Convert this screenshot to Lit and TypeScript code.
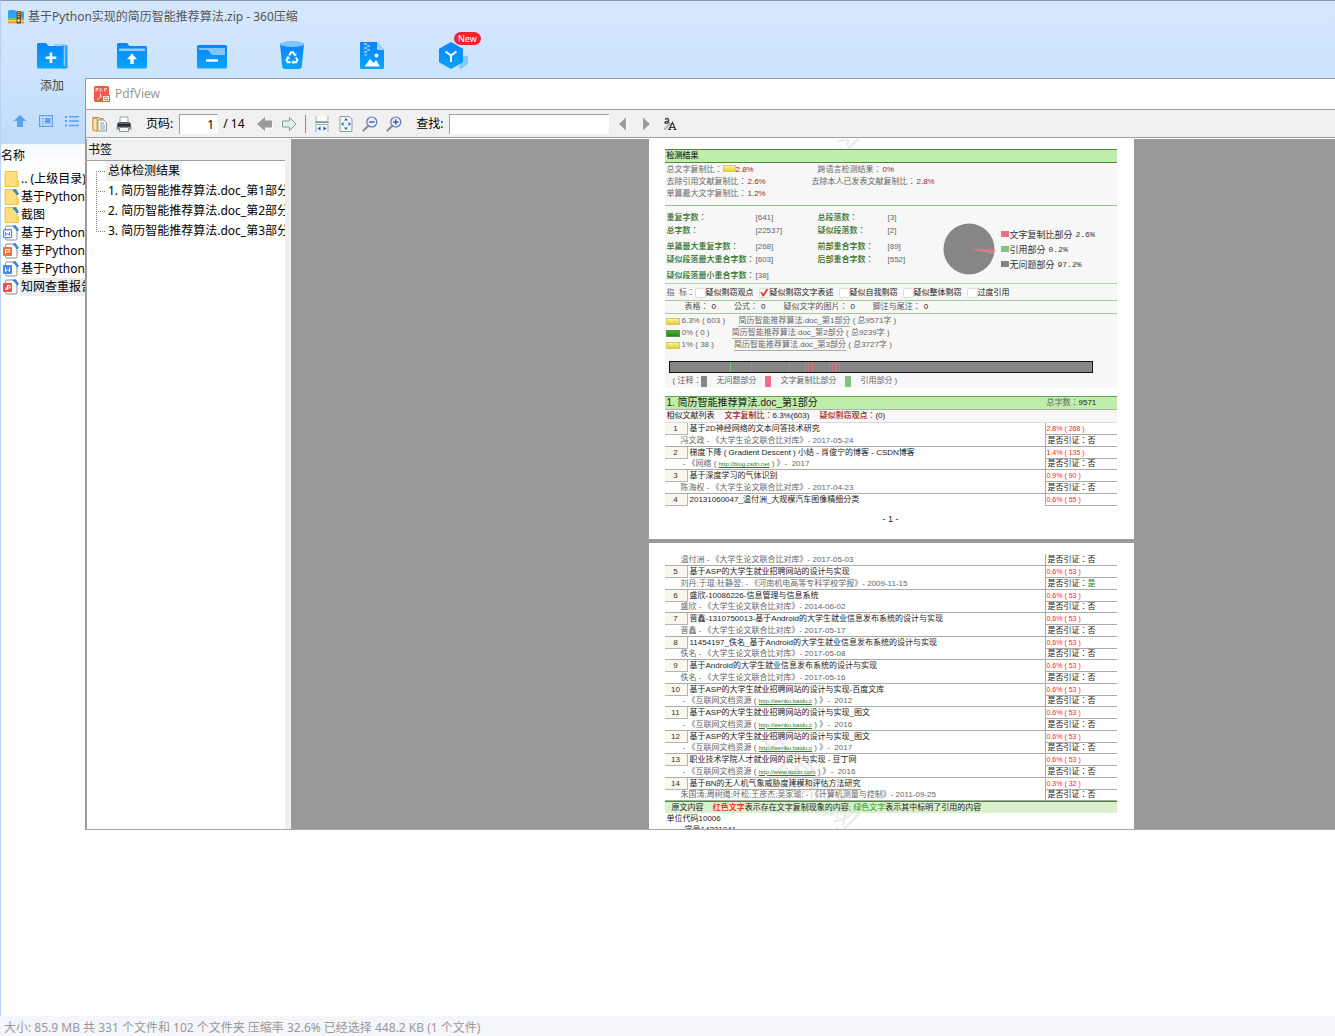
import { LitElement, html, svg, css, nothing } from "lit";
import { customElement } from "lit/decorators.js";
import { classMap } from "lit/directives/class-map.js";

/* ---------- data ---------- */

interface Source {
  no: number;
  title: string;
  linked?: boolean;
  before: string;
  url?: string;
  after?: string;
  rate: string;
  cited?: boolean;
}

const thesis = (who: string, date: string) => `${who} - 《大学生论文联合比对库》- ${date}`;
const WEB = " - 《互联网文档资源 ( ";

const SOURCES: Source[] = [
  { no: 1, title: "基于2D神经网络的文本问答技术研究", before: thesis("冯文政", "2017-05-24"), rate: "2.8% ( 268 )" },
  { no: 2, title: "梯度下降 ( Gradient Descent ) 小结 - 肖俊宁的博客 - CSDN博客", before: " - 《网络 ( ", url: "http://blog.csdn.net", after: " ) 》-  2017", rate: "1.4% ( 135 )" },
  { no: 3, title: "基于深度学习的气体识别", before: thesis("陈海权", "2017-04-23"), rate: "0.9% ( 90 )" },
  { no: 4, title: "20131060047_温付洲_大规模汽车图像精细分类", before: thesis("温付洲", "2017-05-03"), rate: "0.6% ( 55 )" },
  { no: 5, title: "基于ASP的大学生就业招聘网站的设计与实现", linked: true, before: "刘丹;于琨;杜静翌; - 《河南机电高等专科学校学报》- 2009-11-15", rate: "0.6% ( 53 )", cited: true },
  { no: 6, title: "盛欣-10086226-信息管理与信息系统", before: thesis("盛欣", "2014-06-02"), rate: "0.6% ( 53 )" },
  { no: 7, title: "晋鑫-1310750013-基于Android的大学生就业信息发布系统的设计与实现", before: thesis("晋鑫", "2017-05-17"), rate: "0.6% ( 53 )" },
  { no: 8, title: "11454197_佚名_基于Android的大学生就业信息发布系统的设计与实现", before: thesis("佚名", "2017-05-08"), rate: "0.6% ( 53 )" },
  { no: 9, title: "基于Android的大学生就业信息发布系统的设计与实现", before: thesis("佚名", "2017-05-16"), rate: "0.6% ( 53 )" },
  { no: 10, title: "基于ASP的大学生就业招聘网站的设计与实现-百度文库", before: WEB, url: "http://wenku.baidu.c", after: " ) 》-  2012", rate: "0.6% ( 53 )" },
  { no: 11, title: "基于ASP的大学生就业招聘网站的设计与实现_图文", before: WEB, url: "http://wenku.baidu.c", after: " ) 》-  2016", rate: "0.6% ( 53 )" },
  { no: 12, title: "基于ASP的大学生就业招聘网站的设计与实现_图文", before: WEB, url: "http://wenku.baidu.c", after: " ) 》-  2017", rate: "0.6% ( 53 )" },
  { no: 13, title: "职业技术学院人才就业网的设计与实现 - 豆丁网", before: WEB, url: "http://www.docin.com", after: " ) 》-  2016", rate: "0.6% ( 53 )" },
  { no: 14, title: "基于BN的无人机气象威胁度建模和评估方法研究", linked: true, before: "朱国涛;周树道;叶松;王彦杰;吴家瑜; - 《计算机测量与控制》- 2011-09-25", rate: "0.3% ( 32 )" },
];

const COUNTS = [
  [["重复字数：", "[641]", "总段落数：", "[3]"], ["总字数：", "[22537]", "疑似段落数：", "[2]"]],
  [["单篇最大重复字数：", "[268]", "前部重合字数：", "[89]"], ["疑似段落最大重合字数：", "[603]", "后部重合字数：", "[552]"]],
  [["疑似段落最小重合字数：", "[38]", "", ""]],
];

const FLAGS = [
  { name: "疑似剽窃观点", on: false },
  { name: "疑似剽窃文字表述", on: true },
  { name: "疑似自我剽窃", on: false },
  { name: "疑似整体剽窃", on: false },
  { name: "过度引用", on: false },
];

const PARTS = [
  { level: "yellow", text: "6.3% ( 603 )", pad: 6, n: 1, total: 9571 },
  { level: "green", text: "0% ( 0 )", pad: 10, n: 2, total: 9239 },
  { level: "yellow", text: "1% ( 38 )", pad: 9, n: 3, total: 3727 },
];

const HITS = [81, 119, 135, 138, 142, 159, 162, 165, 166, 169, 421];

type FileKind = "folder" | "link-folder" | "doc" | "ppt" | "word" | "pdf";
const FILES: { kind: FileKind; name: string; selected?: boolean }[] = [
  { kind: "folder", name: ".. (上级目录)" },
  { kind: "link-folder", name: "基于Python实现" },
  { kind: "link-folder", name: "截图" },
  { kind: "doc", name: "基于Python实现" },
  { kind: "ppt", name: "基于Python实现" },
  { kind: "word", name: "基于Python实现" },
  { kind: "pdf", name: "知网查重报告", selected: true },
];

const BOOKMARKS = [
  "总体检测结果",
  "1. 简历智能推荐算法.doc_第1部分",
  "2. 简历智能推荐算法.doc_第2部分",
  "3. 简历智能推荐算法.doc_第3部分",
];

/* ---------- icons ---------- */

const blueFill = svg`<defs><linearGradient id="b" x1="0" y1="0" x2="0" y2="1"><stop offset="0" stop-color="#0a84ff"/><stop offset="1" stop-color="#06a5fb"/></linearGradient></defs>`;
const big = (body: unknown) => html`<svg width="32" height="30" viewBox="0 0 32 30">${blueFill}${body}</svg>`;

const iconAdd = big(svg`
  <path d="M26 4h4a1.500 1.500 0 0 1 1.500 1.500V26a1.500 1.500 0 0 1-1.500 1.500H26z" fill="#2b9bfb"/>
  <path d="M1 3.500A1.500 1.500 0 0 1 2.500 2H10l2.500 3H28a1 1 0 0 1 1 1v21.500H2.500A1.500 1.500 0 0 1 1 26z" fill="url(#b)"/>
  <path d="M18 3.800h10.500V25" fill="none" stroke="#8ccafd" stroke-width="1.600"/>
  <path d="M15 11.500v10.500M9.700 16.700h10.600" stroke="#fff" stroke-width="2.600"/>`);
const iconExtract = big(svg`
  <path d="M1 3.500A1.500 1.500 0 0 1 2.500 2H11l2.500 3H29.500A1.500 1.500 0 0 1 31 6.500V26a1.500 1.500 0 0 1-1.500 1.500h-27A1.500 1.500 0 0 1 1 26z" fill="url(#b)"/>
  <path d="M3 7.500h26v2.500H3z" fill="#8fcbff"/>
  <path d="M16 12.500l5 5.700h-3.300v4.800h-3.400v-4.800H11z" fill="#fff"/>`);
const iconOneClick = big(svg`
  <rect x="1" y="4" width="30" height="23.500" rx="1.500" fill="url(#b)"/>
  <path d="M3 7h26v7H16l-4-5H3z" fill="#7fc4ff"/>
  <path d="M10 19.500h12" stroke="#fff" stroke-width="2.400"/>`);
const iconTrash = big(svg`
  <path d="M4 2.500h24L25.800 26a3 3 0 0 1-3 2H9.200a3 3 0 0 1-3-2z" fill="url(#b)"/>
  <ellipse cx="16" cy="3" rx="12" ry="3" fill="#7fc4ff"/>
  <g fill="none" stroke="#fff" stroke-width="2">
    <path d="M13.200 14.500l1.900-3.200h2l1.600 2.700"/><path d="M20 16.500l1.500 2.800-1.200 2h-3"/><path d="M14.500 21.300h-2.800l-1.200-2 1.300-2.300"/>
  </g>
  <path d="M20.500 12l-.4 3.600-3.100-1.600zM17.800 18.900v4.600l-2.600-2.300zM10 15.800l3.200-.4.700 3.300z" fill="#fff"/>`);
const iconImage = big(svg`
  <path d="M4 1h17l7 8v17.500a1.500 1.500 0 0 1-1.500 1.500h-21A1.500 1.500 0 0 1 4 26.500z" fill="url(#b)"/>
  <path d="M21 1l7 8h-7z" fill="#9bd2ff"/>
  <path d="M8 2h3v2H8zM11 4h3v2h-3zM8 6h3v2H8zM11 8h3v2h-3zM8 10h3v2H8zM8.500 13h2.500v1.800H8.500z" fill="#7fc4ff"/>
  <path d="M8.500 25.500l5.500-7.500 3.500 4 2.500-3 4 6.500z" fill="#fff"/><circle cx="20.500" cy="14.500" r="1.900" fill="#fff"/>`);
const iconBox = big(svg`
  <path d="M24 16l8-1.500v8l-6 5h-3z" fill="#84c6ff"/>
  <path d="M15 1l12 6.800v13.400L15 28 3 21.200V7.800z" fill="url(#b)"/>
  <path d="M9.500 10.500l5.500 4 5.500-4M15 14.500v6.500" fill="none" stroke="#fff" stroke-width="2"/>`);

const iconApp = html`<svg width="16" height="16" viewBox="0 0 16 16">
  <path d="M0 2.500A1.500 1.500 0 0 1 1.500 1H7l1.500 1.500H16V12H0z" fill="#2ea3ef"/>
  <path d="M0 9h16v2H0z" fill="#7ac943"/><path d="M0 11.500h16v1.500a1.500 1.500 0 0 1-1.500 1.500h-13A1.500 1.500 0 0 1 0 13z" fill="#f59b23"/>
  <path d="M0 11h16v1.500H0z" fill="#ffd34d"/>
  <rect x="8.500" y="2" width="4.500" height="12.500" fill="#7a5230"/><path d="M10.700 3v5.500" stroke="#f5c26b" stroke-width="1.500" stroke-dasharray="1 1"/>
  <circle cx="10.700" cy="11.500" r="1.300" fill="#ffe9a8"/></svg>`;

const small = (body: unknown) => html`<svg width="14" height="14" viewBox="0 0 14 14" fill="#5f9fee">${body}</svg>`;
const iconUp = small(svg`<path d="M7 1l6.500 6H10v6H4V7H.500z"/>`);
const iconCard = small(svg`<path d="M0 1h14v12H0z M1.200 2.200v9.600h11.600V2.200z" fill-rule="evenodd"/><path d="M3 4h1.600v1.600H3zM3 6.700h1.600v1.400H3zM3 9.200h1.600v1.400H3zM6 4h5.500v5.500H6z"/>`);
const iconList = small(svg`<path d="M0 2h2v2H0zM0 6h2v2H0zM0 10.500h2v2H0zM4 2h10v1.600H4zM4 6.200h10v1.600H4zM4 10.700h10v1.600H4z"/>`);

const dot = svg`<path d="M10 1l2.500-1L16 5l-2 1.500z" fill="#2f86d6"/><path d="M9.500.500l2 .300.800 2-2-.400z" fill="#2f86d6"/>`;
const letters: Record<string, unknown> = {
  doc: svg`<rect x=".600" y="4.600" width="8" height="8" rx="1" fill="#fff" stroke="#4c86f0" stroke-width="1.200"/><path d="M2.500 7v3.500l2-2 2 2V7" fill="none" stroke="#4c86f0"/>`,
  word: svg`<rect y="4" width="9" height="9" rx="1" fill="#4c86f0"/><path d="M2.500 6.500v4l2-2 2 2v-4" fill="none" stroke="#fff"/>`,
  ppt: svg`<rect y="4" width="9" height="9" rx="1" fill="#f2703a"/><path d="M2.500 11V6.500h4v2.500h-4" fill="none" stroke="#fff"/>`,
  pdf: svg`<rect y="4" width="9" height="9" rx="1" fill="#e8504f"/><path d="M2 10.500h2.500V6.500h2.500v2.500H2" fill="none" stroke="#fff"/>`,
};

function fileIcon(kind: FileKind) {
  const body = kind === "folder" || kind === "link-folder"
    ? svg`<path d="M2 .500h12v9h1.500v6H2z" fill="#ffdf7e" stroke="#e8c34f"/><path d="M12.500 10v5.500h3V10z" fill="#fbd261"/>`
    : svg`<path d="M2.500 2.500a1.500 1.500 0 0 1 1.500-1.500h6l4 4v8.500a1.500 1.500 0 0 1-1.500 1.500H4a1.500 1.500 0 0 1-1.500-1.500z" fill="#fff" stroke="#8b8b8b"/>${letters[kind]}`;
  return html`<svg width="16" height="16" viewBox="0 0 16 16">${body}${kind === "folder" ? nothing : dot}</svg>`;
}

const tool = (body: unknown) => html`<svg width="16" height="16" viewBox="0 0 16 16">${body}</svg>`;
const iconPdf = tool(svg`<rect width="15" height="16" rx="1.500" fill="#f4574e"/>
  <path d="M2 5.500V2.500h2v1.500H2M6 2.500v3h1l1-1v-1l-1-1zM10.500 5.500v-3h2.500M10.500 4h2" fill="none" stroke="#ffd9d6" stroke-width=".900"/>
  <path d="M6.500 7.500c.500 3-1 5-3.500 6.500M6.500 9.500c.5 1.500 1.500 2.500 3 2.500" fill="none" stroke="#fff"/>
  <rect x="8.500" y="9.500" width="7" height="6" fill="#fff" stroke="#f4574e"/><circle cx="12" cy="12.300" r="1.500" fill="none" stroke="#f4574e"/><path d="M13 13.500l1.500 1.500" stroke="#f4574e"/>`);
const iconOpen = tool(svg`<path d="M1 1.500h6l1 1h3V14H1z" fill="#f1cf7d" stroke="#b98f3a"/><path d="M1 1.500l4 1.500v12.500L1 14z" fill="#fbe3a2" stroke="#c59b45"/>
  <path d="M6 4h6l2.500 2.500V15H6z" fill="#f4f8f7" stroke="#8fa19e"/><path d="M8 7h4M8 9h5M8 11h5M8 13h5" stroke="#8fa9a6"/>`);
const iconPrint = tool(svg`<path d="M4 1h8v6H4z" fill="#f7fafc" stroke="#9aa5ad"/><path d="M1 7.500L3 6h10l2 1.500V13H1z" fill="#5d6266"/><path d="M2 8h12v2.500H2z" fill="#2c2f31"/>
  <path d="M.500 11h15v2.500H.500z" fill="#8b9196"/><path d="M3.500 11.500h9v4h-9z" fill="#eef6f6" stroke="#8b9499"/>`);
const iconBack = tool(svg`<path d="M8.500 3v3.500H16v6H8.500V15L1.500 9z" fill="#fff"/><path d="M8 1v3.500h7v7H8V15L0 8z" fill="#9b9b9b"/>`);
const iconFwd = tool(svg`<path d="M8.500 1.500L15 8l-6.500 6.500V11h-7V5h7z" fill="#e4edec" stroke="#8b9a98"/>`);
const iconFitW = tool(svg`<path d="M2 0v5.500h12V0" fill="#f7faf9" stroke="#9fb0ae"/><path d="M2 16V8.500h12V16" fill="#eef5f6" stroke="#9fb0ae"/><path d="M1 6.500h14" stroke="#879694"/>
  <path d="M6.500 10.500v4L3.500 12.500zM9.500 10.500v4l3-2z" fill="#2457b8"/>`);
const iconFit = tool(svg`<path d="M2 .500h9.500L14 3v12.500H2z" fill="#eef6f7" stroke="#8fa09e"/>
  <path d="M8 2l2 2.500H6zM8 14l2-2.500H6zM3 8l2.500-2v4zM13 8l-2.500-2v4z" fill="#2e62c9"/>`);
const lens = (plus: boolean) => tool(svg`<path d="M6.500 9.500L1.500 14.500" stroke="#8c8c94" stroke-width="2.200" stroke-linecap="round"/>
  <circle cx="9.800" cy="6" r="5" fill="#eaf1ff" stroke="#5d70cc" stroke-width="1.200"/><path d="M7 6h5.600" stroke="#27419f" stroke-width="1.200"/>
  ${plus ? svg`<path d="M9.800 3.200v5.600" stroke="#27419f" stroke-width="1.200"/>` : nothing}`);
const iconPrev = tool(svg`<path d="M13 2.500v12.500" stroke="#fff"/><path d="M12 1.500v13L5 8z" fill="#9b9b9b"/>`);
const iconNext = tool(svg`<path d="M5 15l8-6.500" stroke="#fff"/><path d="M5 1.500v13L12 8z" fill="#9b9b9b"/>`);
const iconCase = tool(svg`<path d="M3 3.500q2.500-2 3.500 0v4M6.500 5.200q-4 0-3.500 1.500t3.500 0" fill="none" stroke="#444" stroke-width="1.300"/>
  <path d="M2.500 13.500L8.500 7" stroke="#a9b0b8" stroke-width="2"/><path d="M7 13.500l3.500-7 3 7M8.500 11.500h4M6 13.500h3M11.500 13.500h3" fill="none" stroke="#333" stroke-width="1.200"/>`);

/* ---------- report pages ---------- */

@customElement("report-page")
export class ReportPage extends LitElement {
  static properties = { page: { type: Number } };
  declare page: number;

  static styles = css`
    :host {
      display: block; position: relative; overflow: hidden; background: #fff; box-sizing: border-box;
      padding: 10px 17px 0 16px; color: #222; text-spacing-trim: space-all;
      font: 8px/12px "Liberation Sans", "Noto Sans CJK TC", sans-serif;
    }
    :host([page="1"]) { height: 400px; }
    :host([page="2"]) { height: 686px; padding-top: 11px; }
    h2, h3, p, dl, dd, dt { margin: 0; font: inherit; }
    a { color: inherit; text-decoration: none; }
    svg { display: block; }
    .body { position: relative; }
    .mark { position: absolute; font-size: 32px; line-height: 32px; color: #ebebeb; white-space: nowrap; transform: rotate(45deg); }
    .mark-top { left: 98px; top: -54px; }
    .mark-bottom { left: 94px; top: 222px; }
    .band { background: #bfedab; border-top: 1px solid #4a8a3a; border-bottom: 1px solid #4a8a3a; padding-left: 2px; font-weight: 500; }
    .box { background: #f7f7f7; padding-bottom: 1px; }
    .rates { display: grid; padding: 1px 2px 5px; border-bottom: 1px solid #9cc092; }
    .rate-row { display: grid; grid-template-columns: 151px 1fr; color: #666; }
    .rate-row.near { grid-template-columns: 145px 1fr; }
    .red { color: #9c1c1c; margin-left: 1px; }
    .chip { display: inline-block; width: 13px; height: 7px; border: 1px solid #d9c95a; box-sizing: border-box; }
    .chip + .red { margin-left: 0; }
    .yellow { background: linear-gradient(#fbf6a0, #e6d02c); }
    .green { background: linear-gradient(#4fae34, #2c8416); border-color: #4c9c3c; }
    .counts { display: flex; padding: 5px 2px 1px; border-bottom: 1px solid #b5d3ab; align-items: center; }
    .groups { display: flex; flex-direction: column; gap: 3px; width: 276px; }
    .count { display: grid; grid-template-columns: 89px 62px 70px 1fr; line-height: 13px; color: #666; }
    .count dt { color: #2c6e1c; font-weight: 500; white-space: nowrap; }
    .chart { display: flex; align-items: center; gap: 6px; padding-top: 5px; }
    .legend { display: grid; gap: 3px; padding-top: 2px; font-size: 9px; color: #333; }
    .legend div { display: flex; align-items: center; gap: 1px; }
    .legend i { width: 8px; height: 6px; margin-bottom: 2px; }
    .legend code { font: 8px/12px "Liberation Mono", monospace; margin-left: 2px; }
    .pink { background: #ec6e86; } .lime { background: #86c281; } .grey { background: #868686; }
    .flags { display: flex; gap: 5px; padding: 2px 2px 1px; border-bottom: 1px solid #a5c99b; line-height: 13px; }
    .flags > span { color: #666; width: 23px; white-space: pre; }
    .flags label { display: flex; align-items: center; white-space: nowrap; }
    input { appearance: none; box-sizing: border-box; margin: 0; width: 11px; height: 10px; background: #fff; border: 1px solid #ddd; border-radius: 2px; }
    input:checked::after { content: ""; display: block; width: 9px; height: 8px; background: #e0392f; clip-path: polygon(10% 45%, 25% 40%, 42% 65%, 80% 0, 100% 5%, 48% 100%, 35% 100%); }
    .stats { display: flex; gap: 18px; padding: 0 20px; border-bottom: 1px solid #a5c99b; color: #555; }
    .stats span { color: #222; margin-left: 3px; }
    .parts { padding: 1px 1px; color: #666; white-space: pre; }
    .part { display: flex; align-items: center; }
    .part .chip { width: 14px; margin-right: 2px; }
    .part a { line-height: 10px; border-bottom: 1px solid #aaa; }
    .strip { margin: 9px 24px 0 4px; border: 1px solid #111; background: #868686; }
    .strip svg { width: 100%; }
    .notes { display: flex; align-items: center; gap: 9px; padding: 2px 8px 0; color: #666; white-space: pre; }
    .notes span { display: flex; align-items: center; }
    .notes i { width: 6px; height: 11px; }
    .section { display: grid; grid-template-columns: 1fr 70px; margin-top: 8px; border-top: 1px solid #6a9f5c; border-bottom: 1px solid #b0b0b0; background: #bfedab; padding-left: 2px; }
    .section h3 { font-size: 10px; }
    .section p { color: #666; } .section p span { color: #222; }
    .similar { background: #f7f7f7; padding-left: 2px; border-bottom: 1px solid #ddd; }
    .similar b { font-weight: 500; color: #9c1c1c; margin-left: 10px; }
    table { width: 100%; table-layout: fixed; border-collapse: separate; border-spacing: 0; }
    .c-no { width: 23px; } .c-rate { width: 72px; }
    td { padding: 0; height: 11px; line-height: 10px; white-space: nowrap; }
    .no { background: #faf7ee; text-align: center; border-right: 1px solid #b5b5b5; border-bottom: 1px solid #b5b5b5; box-sizing: border-box; height: 12px; color: #333; }
    .title { padding-left: 2px; }
    .title a { display: block; width: fit-content; box-shadow: 0 1px #aaa; }
    .rate, .cite { border-left: 1px solid #aaa; border-bottom: 1px solid #aaa; }
    .rate { font-size: 7px; color: #ff2020; padding-left: 1px; }
    .cite { padding-left: 2px; }
    .cite.yes span { color: #1d7a1d; }
    .meta { padding-left: 16px; color: #666; border-bottom: 1px solid #aaa; white-space: pre; }
    .short td { height: 10px; }
    .meta a { font-size: 6px; color: #2c7a2c; text-decoration: underline; }
    .folio { text-align: center; margin-top: 7px; font-size: 9px; }
    .key { background: #dbf0cd; border-top: 1px solid #4a8a3a; padding-left: 7px; line-height: 11px; }
    .key b { font-weight: 500; color: #ff1010; margin-left: 7px; } .key em { font-style: normal; color: #17a317; }
    .code { padding-left: 2px; line-height: 11px; }
    .indent { padding-left: 20px; line-height: 11px; }
  `;

  private titleRow(s: Source) {
    return html`<tr>
      <td class="no">${s.no}</td>
      <td class="title">${s.linked ? html`<a href="#s${s.no}">${s.title}</a>` : s.title}</td>
      <td class="rate">${s.rate}</td>
    </tr>`;
  }

  private metaRow(s: Source) {
    return html`<tr class=${classMap({ short: s.no % 2 === 0 && s.no !== 4 })}>
      <td class="meta" colspan="2">${s.before}${s.url ? html`<a href=${s.url}>${s.url}</a>` : nothing}${s.after ?? ""}</td>
      <td class=${classMap({ cite: true, yes: !!s.cited })}>是否引证：<span>${s.cited ? "是" : "否"}</span></td>
    </tr>`;
  }

  private table(rows: unknown) {
    return html`<table>
      <colgroup><col class="c-no"><col><col class="c-rate"></colgroup>
      <tbody>${rows}</tbody>
    </table>`;
  }

  private first() {
    return html`
      <div class="mark mark-top" aria-hidden="true">中国知网</div>
      <div class="body">
      <h2 class="band">检测结果</h2>
      <div class="box">
        <div class="rates">
          <div class="rate-row"><span>总文字复制比：<i class="chip yellow"></i><span class="red">2.8%</span></span><span>跨语言检测结果：<span class="red">0%</span></span></div>
          <div class="rate-row near"><span>去除引用文献复制比：<span class="red">2.6%</span></span><span>去除本人已发表文献复制比：<span class="red">2.8%</span></span></div>
          <div class="rate-row"><span>单篇最大文字复制比：<span class="red">1.2%</span></span></div>
        </div>
        <div class="counts">
          <div class="groups">${COUNTS.map((g) => html`<div>${g.map((r) => html`<dl class="count">
            <dt>${r[0]}</dt><dd>${r[1]}</dd><dt>${r[2]}</dt><dd>${r[3]}</dd></dl>`)}</div>`)}</div>
          <div class="chart">
            <svg width="52" height="52" viewBox="0 0 52 52"><circle cx="26" cy="26" r="25.500" fill="#868686"/><path d="M26 26H51.500A25.500 25.500 0 0 1 51.100 30.300z" fill="#ec6e86"/><path d="M26 26L51.100 30.300l-.1.500z" fill="#86c281"/></svg>
            <div class="legend">
              <div><i class="pink"></i>文字复制比部分<code>2.6%</code></div>
              <div><i class="lime"></i>引用部分<code>0.2%</code></div>
              <div><i class="grey"></i>无问题部分<code>97.2%</code></div>
            </div>
          </div>
        </div>
        <div class="flags"><span>指  标：</span>${FLAGS.map((f) => html`<label><input type="checkbox" .checked=${f.on}>${f.name}</label>`)}</div>
        <div class="stats">
          <div>表格：<span>0</span></div><div>公式：<span>0</span></div><div>疑似文字的图片：<span>0</span></div><div>脚注与尾注：<span>0</span></div>
        </div>
        <div class="parts">${PARTS.map((p) => html`<div class="part"><i class="chip ${p.level}"></i><span>${p.text}${"\u00a0".repeat(p.pad)}</span><a href="#p${p.n}">简历智能推荐算法.doc_第${p.n}部分</a><span> ( 总${p.total}字 )</span></div>`)}</div>
        <div class="strip"><svg height="10" viewBox="0 0 422 10" preserveAspectRatio="none"><rect x="60" width="1" height="10" fill="#86c281"/>${HITS.map((x) => svg`<rect x=${x} width="1" height="10" fill="#d8707f"/>`)}</svg></div>
        <div class="notes"><span>( 注释：<i class="grey"></i></span>无问题部分<i class="pink"></i>文字复制比部分<i class="lime"></i>引用部分 )</div>
      </div>
      <div class="section"><h3>1. 简历智能推荐算法.doc_第1部分</h3><p>总字数：<span>9571</span></p></div>
      <p class="similar">相似文献列表<b>文字复制比：</b>6.3%(603)<b>疑似剽窃观点：</b>(0)</p>
      ${this.table(SOURCES.slice(0, 4).map((s) => [this.titleRow(s), s.no < 4 ? this.metaRow(s) : nothing]))}
      <p class="folio">- 1 -</p>
      </div>`;
  }

  private second() {
    return html`
      <div class="mark mark-bottom" aria-hidden="true">中国知网</div>
      <div class="body">
      ${this.table([this.metaRow(SOURCES[3]), SOURCES.slice(4).map((s) => [this.titleRow(s), this.metaRow(s)])])}
      <p class="key">原文内容 <b>红色文字</b>表示存在文字复制现象的内容; <em>绿色文字</em>表示其中标明了引用的内容</p>
      <p class="code">单位代码10006</p>
      <p class="indent">学号14231041</p>
      </div>`;
  }

  render() {
    return this.page === 1 ? this.first() : this.second();
  }
}

/* ---------- PDF viewer window ---------- */

@customElement("pdf-window")
export class PdfWindow extends LitElement {
  static styles = css`
    :host { display: flex; flex-direction: column; box-sizing: border-box; border: 1px solid #8f9aa6; border-bottom-color: #a6a6a6; background: #fff; color: #000; overflow: hidden; }
    svg { display: block; flex: none; }
    .title { display: flex; align-items: center; gap: 5px; height: 30px; padding-left: 8px; color: #999; }
    .bar { display: flex; align-items: center; height: 27px; padding-left: 6px; background: #f0f0f0; border-top: 1px solid #a0a0a0; border-bottom: 1px solid #a0a0a0; }
    .group { display: flex; align-items: center; gap: 8px; }
    button { display: block; width: 16px; height: 16px; padding: 0; border: 0; background: none; }
    label { margin: 0 6px 0 14px; }
    input { box-sizing: border-box; height: 20px; border: 0; border-top: 1px solid #a0a0a0; border-left: 1px solid #a0a0a0; background: #fff; font: inherit; padding: 0 4px 0 0; outline: 0; color: inherit; }
    .num { width: 39px; text-align: right; }
    .find { width: 160px; margin-right: 5px; }
    .total { width: 24px; margin: 0 10px 0 5px; white-space: nowrap; }
    .sep { width: 1px; height: 18px; background: #8c8c8c; }
    .main { display: flex; flex: 1; min-height: 0; margin-top: 1px; border-left: 1px solid #a0a0a0; }
    .side { display: flex; flex-direction: column; width: 204px; box-sizing: border-box; padding-right: 6px; background: #f0f0f0; }
    h2 { margin: 0; padding-left: 1px; font: inherit; line-height: 21px; border-bottom: 1px solid #a0a0a0; }
    ul { flex: 1; margin: 0; padding: 0 0 0 9px; list-style: none; background: #fff; overflow: hidden; }
    li { display: flex; height: 20px; white-space: nowrap; }
    li a { padding: 0 2px; line-height: 19px; height: 20px; color: inherit; text-decoration: none; }
    .on { background: #f0f0f0; }
    .view { flex: 1; min-width: 0; display: flex; flex-direction: column; align-items: center; gap: 4px; background: #999; overflow: hidden; }
    report-page { flex: none; width: 485px; }
  `;

  private btn(label: string, icon: unknown) {
    return html`<button type="button" aria-label=${label}>${icon}</button>`;
  }

  render() {
    return html`
      <div class="title">${iconPdf}<span>PdfView</span></div>
      <div class="bar">
        <div class="group">${this.btn("打开", iconOpen)}${this.btn("打印", iconPrint)}</div>
        <label for="page">页码:</label><input id="page" class="num" .value=${"1"}>
        <span class="total">/ 14</span>
        <div class="group">${this.btn("后退", iconBack)}${this.btn("前进", iconFwd)}<span class="sep"></span>
          ${this.btn("适合宽度", iconFitW)}${this.btn("适合页面", iconFit)}${this.btn("缩小", lens(false))}${this.btn("放大", lens(true))}</div>
        <label for="find">查找:</label><input id="find" class="find">
        <div class="group">${this.btn("上一个", iconPrev)}${this.btn("下一个", iconNext)}${this.btn("区分大小写", iconCase)}</div>
      </div>
      <div class="main">
        <div class="side">
          <h2>书签</h2>
          <ul>${BOOKMARKS.map((b, i) => html`<li>
            <svg width="10" height="20" viewBox="0 0 10 20" stroke="#808080" stroke-dasharray="1 1"><path d="M.500 ${i ? 0 : 10}V${i === BOOKMARKS.length - 1 ? 10 : 20}M0 10.500h9" /></svg>
            <a href="#b${i}" class=${i ? "" : "on"}>${b}</a></li>`)}</ul>
        </div>
        <div class="view"><report-page page="1"></report-page><report-page page="2"></report-page></div>
      </div>`;
  }
}

/* ---------- archive manager ---------- */

@customElement("app-root")
export class AppRoot extends LitElement {
  static styles = css`
    :host {
      display: flex; flex-direction: column; position: relative; overflow: hidden; height: 100vh; background: #fff;
      font: 12px/18px "Noto Sans", "Noto Sans CJK SC", sans-serif; color: #000;
    }
    svg { display: block; flex: none; }
    .head { box-sizing: border-box; height: 144px; border-top: 1px solid #8497ab; border-left: 1px solid #b4d2f6; background: linear-gradient(#d5e7fb, #cbe3fe 55%, #bfdafa); }
    h1 { display: flex; align-items: center; gap: 4px; margin: 0; padding: 7px 7px 0; font: inherit; color: #555; }
    .tools { display: flex; padding: 15px 0 0 11px; }
    .tool { position: relative; display: flex; flex-direction: column; align-items: center; gap: 6px; width: 80px; padding: 0; border: 0; background: none; font: inherit; color: #444; }
    .new { position: absolute; left: 42px; top: -9px; padding: 0 4px; border-radius: 7px; background: #f5222d; color: #fff; font-size: 9px; line-height: 13px; }
    .modes { display: flex; gap: 12px; padding: 19px 0 0 12px; }
    .modes button { width: 14px; height: 14px; padding: 0; border: 0; background: none; }
    .files { flex: 1; border-left: 1px solid #b4d2f6; background: linear-gradient(#f5f9fe, #fff 25px); }
    .files h2 { margin: 0; font: inherit; line-height: 24px; height: 26px; }
    ul { margin: 0; padding: 0 0 0 2px; list-style: none; width: 140px; }
    li { display: flex; align-items: center; gap: 1px; height: 18px; white-space: nowrap; }
    li span { padding: 0 1px; }
    .sel { background: #eee; }
    footer { background: #f4f6fb; color: #999; line-height: 20px; height: 20px; padding: 2px 4px 0; box-sizing: border-box; white-space: nowrap; }
    pdf-window { position: absolute; left: 85px; top: 78px; right: -157px; bottom: 206px; }
  `;

  render() {
    return html`
      <header class="head">
        <h1>${iconApp}基于Python实现的简历智能推荐算法.zip - 360压缩</h1>
        <div class="tools">
          <button class="tool" type="button">${iconAdd}<span>添加</span></button>
          <button class="tool" type="button" aria-label="解压到">${iconExtract}</button>
          <button class="tool" type="button" aria-label="一键解压">${iconOneClick}</button>
          <button class="tool" type="button" aria-label="删除">${iconTrash}</button>
          <button class="tool" type="button" aria-label="图片压缩">${iconImage}</button>
          <button class="tool" type="button">${iconBox}<span class="new">New</span></button>
        </div>
        <div class="modes">
          <button type="button" aria-label="上级目录">${iconUp}</button>
          <button type="button" aria-label="视图">${iconCard}</button>
          <button type="button" aria-label="列表">${iconList}</button>
        </div>
      </header>
      <main class="files">
        <h2>名称</h2>
        <ul>${FILES.map((f) => html`<li>${fileIcon(f.kind)}<span class=${classMap({ sel: !!f.selected })}>${f.name}</span></li>`)}</ul>
      </main>
      <footer>大小: 85.9 MB 共 331 个文件和 102 个文件夹 压缩率 32.6% 已经选择 448.2 KB (1 个文件)</footer>
      <pdf-window></pdf-window>`;
  }
}
